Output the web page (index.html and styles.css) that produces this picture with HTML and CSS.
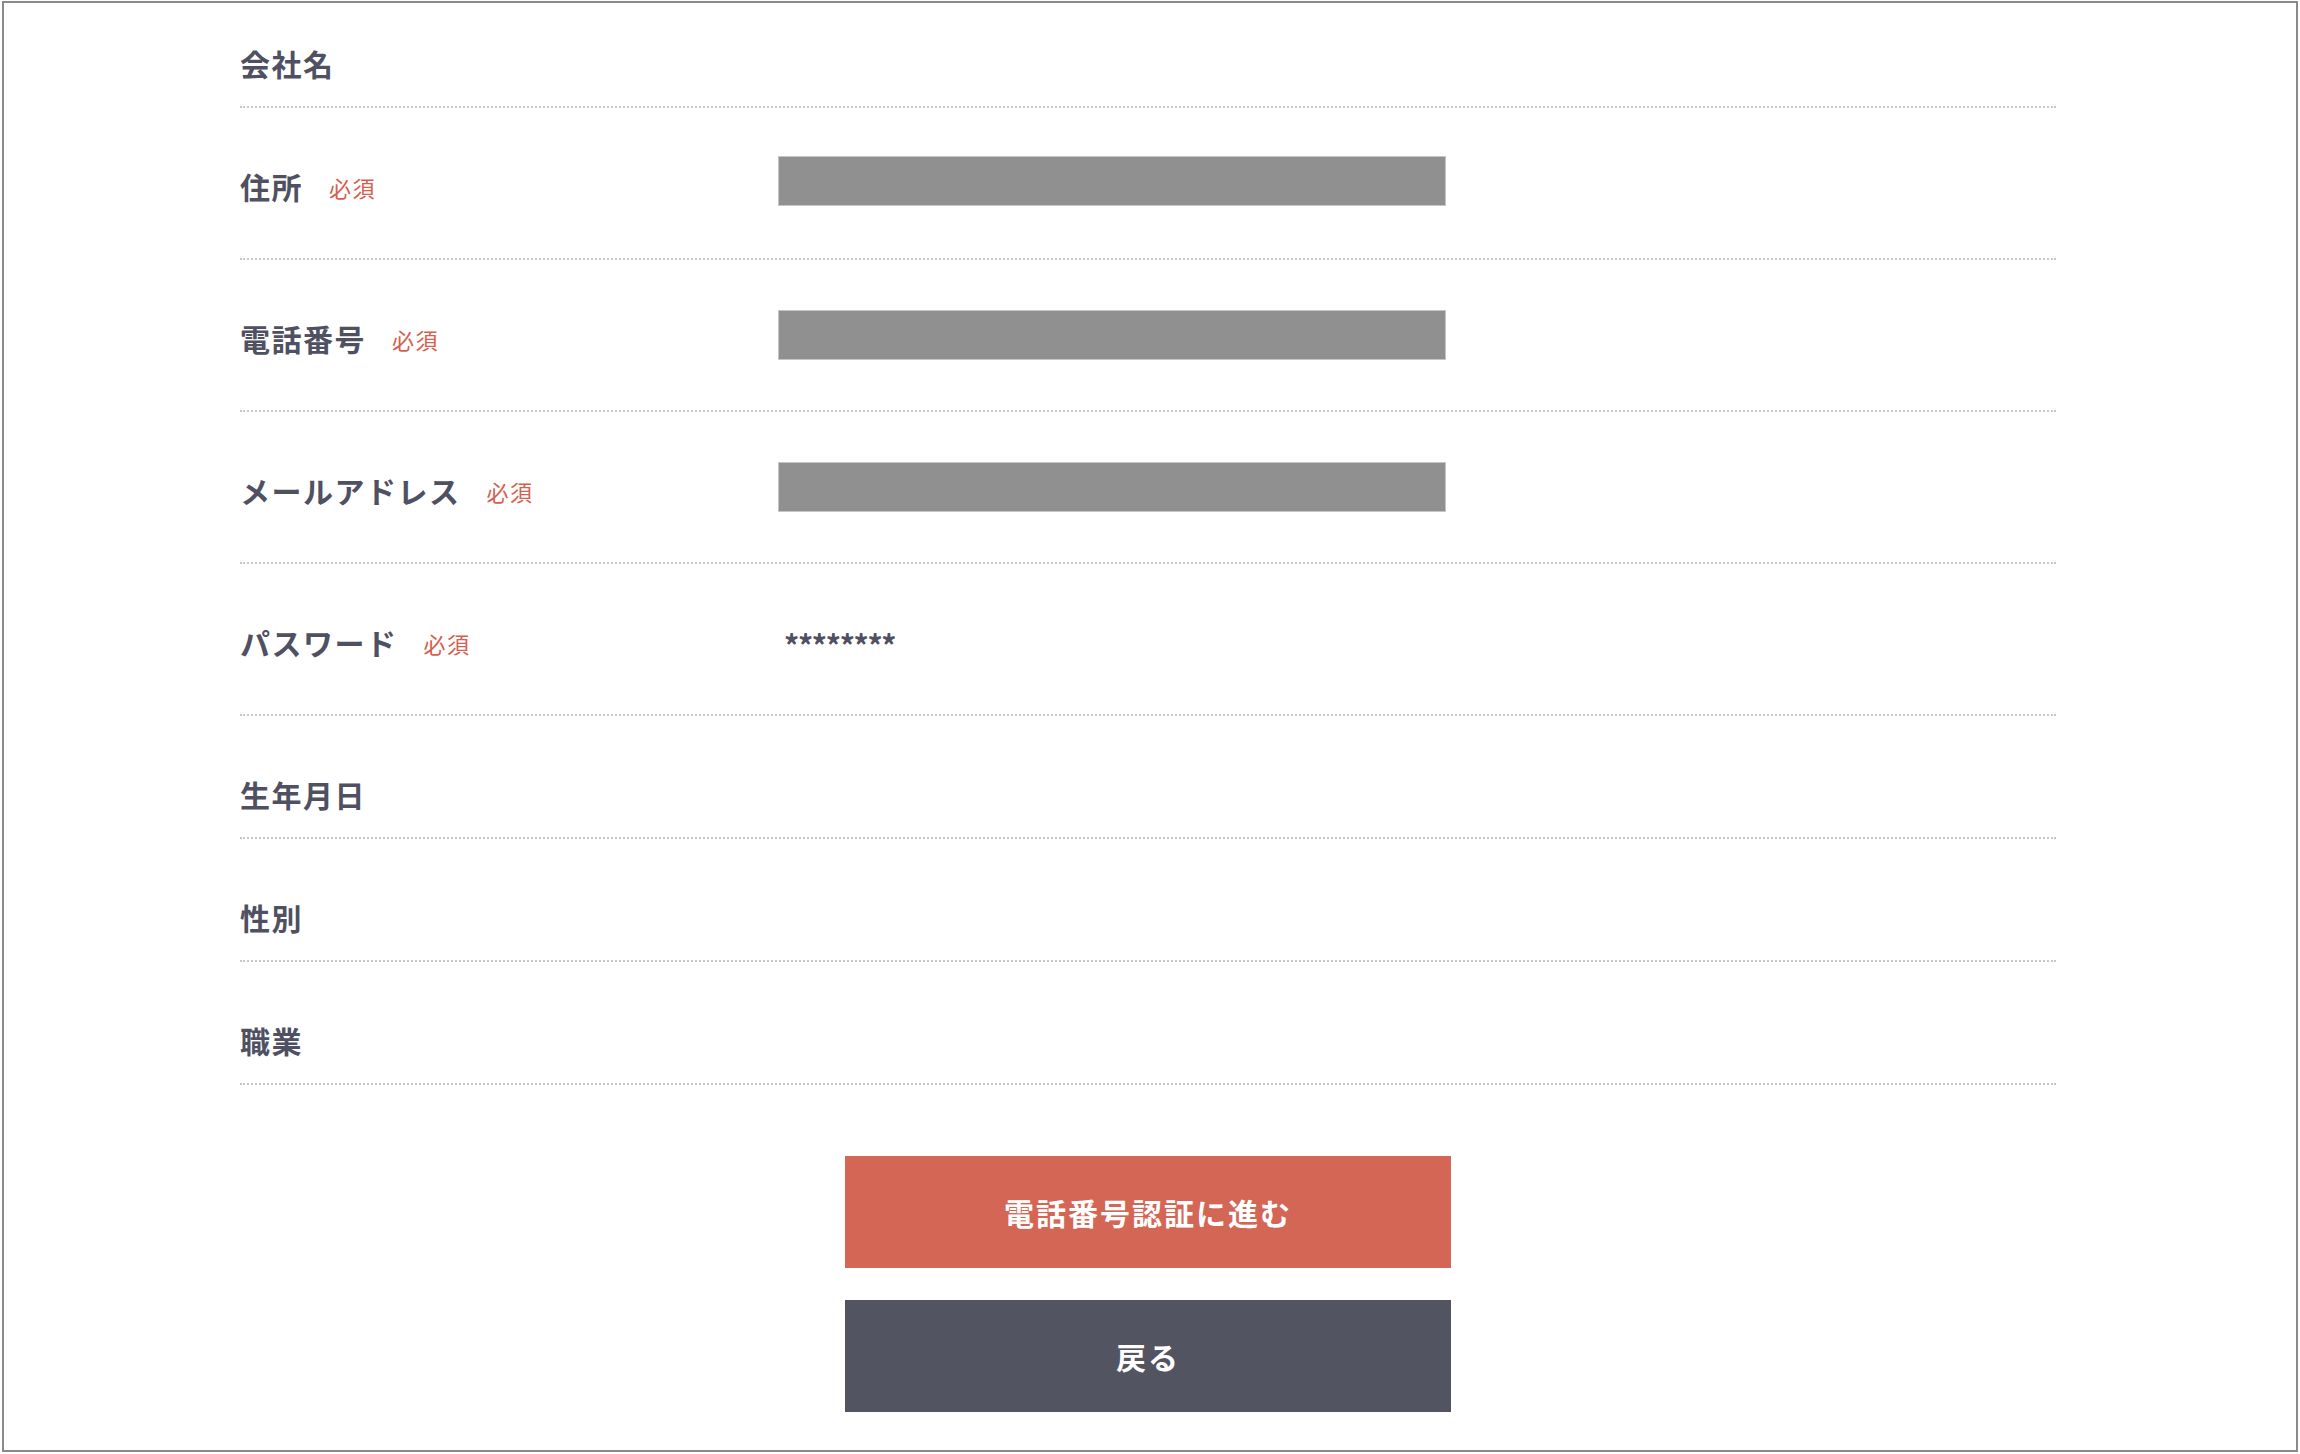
FILE: index.html
```html
<!DOCTYPE html>
<html lang="ja">
<head>
	<meta charset="utf-8">
	<title>会員情報の確認</title>
	<link rel="stylesheet" href="styles.css">
</head>
<body>

<div class="marco">
	<div class="formulario">
		<div class="fila fila-simple fila-primera">
			<div class="etiqueta">会社名</div>
			<div class="valor"></div>
		</div>
		<div class="fila">
			<div class="etiqueta">住所<span class="requerido">必須</span></div>
			<div class="valor"><div class="campo campo-direccion"></div></div>
		</div>
		<div class="fila">
			<div class="etiqueta">電話番号<span class="requerido">必須</span></div>
			<div class="valor"><div class="campo"></div></div>
		</div>
		<div class="fila">
			<div class="etiqueta">メールアドレス<span class="requerido">必須</span></div>
			<div class="valor"><div class="campo"></div></div>
		</div>
		<div class="fila">
			<div class="etiqueta">パスワード<span class="requerido">必須</span></div>
			<div class="valor"><div class="texto">********</div></div>
		</div>
		<div class="fila fila-simple">
			<div class="etiqueta">生年月日</div>
			<div class="valor"></div>
		</div>
		<div class="fila fila-simple">
			<div class="etiqueta">性別</div>
			<div class="valor"></div>
		</div>
		<div class="fila fila-simple">
			<div class="etiqueta">職業</div>
			<div class="valor"></div>
		</div>
	</div>

	<div class="botones">
		<a class="boton boton-siguiente" href="#">電話番号認証に進む</a>
		<a class="boton boton-volver" href="#">戻る</a>
	</div>
</div>

</body>
</html>
```

FILE: styles.css
```css
html, body {
	margin: 0;
	padding: 0;
	background-color: white;
}

body {
	font-family: "Noto Sans CJK JP", "Noto Sans", sans-serif;
	color: #4f5061;
}

div.marco {
	box-sizing: border-box;
	height: 1451px;
	margin: 1px 2px 0 2px;
	padding: 0 0 0 236px;
	border: 2px solid #8a8a8a;
}

div.formulario {
	width: 1816px;
}

/* cada fila del formulario */
div.fila {
	display: flex;
	align-items: flex-start;
	padding: 50px 0 50px;
	border-bottom: 2px dotted #c6c6c6;
}

div.fila.fila-simple {
	padding: 50px 0 21px;
}

div.fila.fila-simple.fila-primera {
	padding: 32px 0 21px;
}

div.etiqueta {
	flex: 0 0 538px;
	height: 44px;
	margin-top: 6px;
	font-size: 30px;
	line-height: 44px;
	font-weight: bold;
	letter-spacing: 1.5px;
	white-space: nowrap;
}

span.requerido {
	margin-left: 26px;
	font-size: 22px;
	line-height: 22px;
	font-weight: normal;
	letter-spacing: 1.5px;
	color: #d65f4f;
	vertical-align: 2px;
}

div.valor {
	flex: 1;
}

div.campo {
	box-sizing: border-box;
	width: 668px;
	height: 50px;
	background-color: #909090;
	border: 1px solid #c6c6c6;
}

div.campo.campo-direccion {
	margin-top: -2px;
}

div.texto {
	padding-left: 6px;
	margin-top: 10px;
	font-size: 30px;
	line-height: 40px;
	font-weight: bold;
	letter-spacing: -1.3px;
}

div.botones {
	display: flex;
	flex-direction: column;
	align-items: center;
	gap: 32px;
	width: 1816px;
	margin-top: 71px;
}

a.boton {
	display: flex;
	align-items: center;
	justify-content: center;
	width: 606px;
	height: 112px;
	font-size: 30px;
	line-height: 44px;
	font-weight: bold;
	letter-spacing: 2px;
	color: white;
	text-decoration: none;
}

a.boton-siguiente {
	background-color: #d46655;
}

a.boton-volver {
	background-color: #525461;
}
```
